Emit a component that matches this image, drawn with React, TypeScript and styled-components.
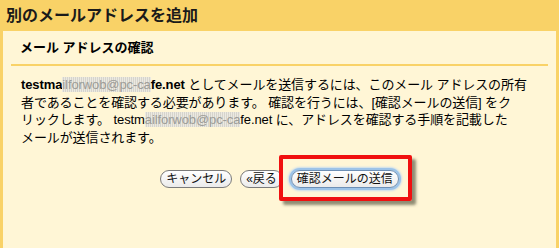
import styled, { createGlobalStyle } from 'styled-components';

const GlobalStyle = createGlobalStyle`
  html, body {
    margin: 0;
    padding: 0;
    background: #f9d267;
  }
`;

const FONT = `"Liberation Sans", "Noto Sans CJK JP", sans-serif`;

function App() {
  return (
    <Page>
      <GlobalStyle />
      <Title>別のメールアドレスを追加</Title>
      <Panel>
        <SectionHeading>
          <span>メール アドレスの確認</span>
        </SectionHeading>
        <Message>
          <b>
            testma<Masked>ilforwob@pc-ca</Masked>fe.net
          </b>{' '}
          としてメールを送信するには、このメール アドレスの所有
          <br />
          者であることを確認する必要があります。 確認を行うには、[確認メールの送信] をク
          <br />
          リックします。 testm<Masked>ailforwob@pc-ca</Masked>fe.net に、アドレスを確認する手順を記載した
          <br />
          メールが送信されます。
        </Message>
        <Actions>
          <PillButton>キャンセル</PillButton>
          <PillButton>«戻る</PillButton>
          <Highlighted>
            <PillButton $focused>確認メールの送信</PillButton>
            <RedBox />
          </Highlighted>
        </Actions>
      </Panel>
    </Page>
  );
}
export default App;

const Page = styled.div`
  width: 559px;
  height: 248px;
  display: flex;
  flex-direction: column;
  background: #f9d267;
  font-family: ${FONT};
  color: #000;
  overflow: hidden;
`;

const Title = styled.h1`
  margin: 0;
  height: 31px;
  padding-left: 6px;
  font-size: 16px;
  line-height: 32px;
  font-weight: bold;
  color: #1a1a1a;
`;

const Panel = styled.div`
  flex: 1;
  margin: 0 3px 0 3px;
  padding: 8px 8px 0 8px;
  background: #fff6d6;
`;

const SectionHeading = styled.div`
  padding: 0 9px 8px;
  border-bottom: 2px solid #f9d267;
  font-size: 13px;
  line-height: 17px;
  font-weight: bold;
`;

const Message = styled.p`
  margin: 10px 0 0 10px;
  font-size: 13px;
  line-height: 17.7px;
  white-space: nowrap;
  letter-spacing: -0.1px;
`;

const Masked = styled.span`
  color: #9c9c98;
  background: repeating-linear-gradient(90deg, #ebe9e1 0 1px, #d6d4cc 1px 2px);
  font-weight: normal;
`;

const Actions = styled.div`
  display: flex;
  justify-content: center;
  align-items: center;
  gap: 8px;
  margin-top: 23px;
`;

const PillButton = styled.button<{ $focused?: boolean }>`
  height: 18px;
  padding: 0 5px;
  border: 1px solid #7a7a7a;
  border-radius: 9px;
  background: linear-gradient(#ffffff, #ebebeb);
  font-family: ${FONT};
  font-size: 12px;
  line-height: 16px;
  color: #111;
  box-shadow: ${(p) => (p.$focused ? '0 0 0 2px #9cc3e8, 0 0 2px 3px #c7dcef' : 'none')};
  border-color: ${(p) => (p.$focused ? '#6d8fb5' : '#7a7a7a')};
`;

const Highlighted = styled.span`
  position: relative;
  display: inline-flex;
`;

const RedBox = styled.span`
  position: absolute;
  top: -15px;
  left: -12px;
  right: -13px;
  bottom: -13px;
  border: 4px solid #f0100f;
  border-radius: 2px;
  box-shadow: 4px 4px 3px rgba(70, 70, 50, 0.6);
  pointer-events: none;
`;
